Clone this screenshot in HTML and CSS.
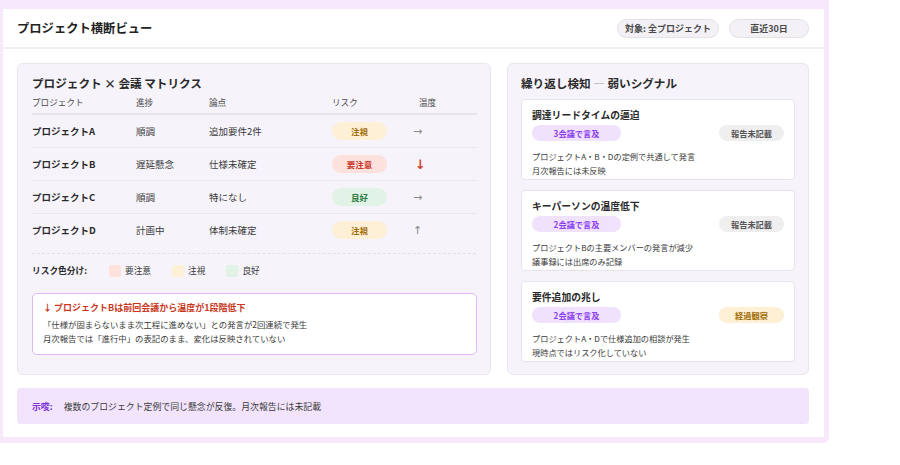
FILE: index.html
```html
<!DOCTYPE html>
<html lang="ja">
<head>
  <meta charset="UTF-8">
  <meta name="viewport" content="width=device-width, initial-scale=1.0">
  <title>プロジェクト横断ビュー</title>
  <link rel="stylesheet" href="styles.css">
</head>
<body>
  <div class="frame">
    <div class="sheet">
      <header class="topbar">
        <h1 class="title">プロジェクト横断ビュー</h1>
        <div class="filters">
          <span class="chip">対象: 全プロジェクト</span>
          <span class="chip">直近30日</span>
        </div>
      </header>

      <main class="content">
        <div class="columns">
          <section class="panel matrix">
            <h2 class="panel-title">プロジェクト × 会議 マトリクス</h2>
            <div class="table">
              <div class="row head">
                <span>プロジェクト</span>
                <span>進捗</span>
                <span>論点</span>
                <span>リスク</span>
                <span class="temp-head">温度</span>
              </div>
              <div class="row">
                <span class="name">プロジェクトA</span>
                <span>順調</span>
                <span>追加要件2件</span>
                <span><em class="risk watch">注視</em></span>
                <span class="temp">→</span>
              </div>
              <div class="row">
                <span class="name">プロジェクトB</span>
                <span>遅延懸念</span>
                <span>仕様未確定</span>
                <span><em class="risk alert">要注意</em></span>
                <span class="temp down">↓</span>
              </div>
              <div class="row">
                <span class="name">プロジェクトC</span>
                <span>順調</span>
                <span>特になし</span>
                <span><em class="risk good">良好</em></span>
                <span class="temp">→</span>
              </div>
              <div class="row last">
                <span class="name">プロジェクトD</span>
                <span>計画中</span>
                <span>体制未確定</span>
                <span><em class="risk watch">注視</em></span>
                <span class="temp">↑</span>
              </div>
            </div>

            <div class="legend">
              <strong>リスク色分け:</strong>
              <span class="key"><i class="swatch alert"></i>要注意</span>
              <span class="key"><i class="swatch watch"></i>注視</span>
              <span class="key"><i class="swatch good"></i>良好</span>
            </div>

            <div class="notice">
              <p class="notice-title">↓ プロジェクトBは前回会議から温度が1段階低下</p>
              <p>「仕様が固まらないまま次工程に進めない」との発言が2回連続で発生</p>
              <p>月次報告では「進行中」の表記のまま、変化は反映されていない</p>
            </div>
          </section>

          <section class="panel signals">
            <h2 class="panel-title">繰り返し検知 <span class="dash">—</span> 弱いシグナル</h2>

            <article class="signal">
              <h3>調達リードタイムの逼迫</h3>
              <div class="tags">
                <span class="tag mention">3会議で言及</span>
                <span class="tag missing">報告未記載</span>
              </div>
              <p>プロジェクトA・B・Dの定例で共通して発言</p>
              <p>月次報告には未反映</p>
            </article>

            <article class="signal">
              <h3>キーパーソンの温度低下</h3>
              <div class="tags">
                <span class="tag mention">2会議で言及</span>
                <span class="tag missing">報告未記載</span>
              </div>
              <p>プロジェクトBの主要メンバーの発言が減少</p>
              <p>議事録には出席のみ記録</p>
            </article>

            <article class="signal">
              <h3>要件追加の兆し</h3>
              <div class="tags">
                <span class="tag mention">2会議で言及</span>
                <span class="tag observe">経過観察</span>
              </div>
              <p>プロジェクトA・Dで仕様追加の相談が発生</p>
              <p>現時点ではリスク化していない</p>
            </article>
          </section>
        </div>

        <div class="insight">
          <strong>示唆:</strong>
          <span>複数のプロジェクト定例で同じ懸念が反復。月次報告には未記載</span>
        </div>
      </main>
    </div>
  </div>
</body>
</html>
```

FILE: styles.css
```css
* {
  box-sizing: border-box;
}

body {
  margin: 0;
  background-color: #ffffff;
  font-family: 'Noto Sans CJK JP', 'Noto Sans', sans-serif;
  color: #3a3a3a;
}

h1, h2, h3, p {
  margin: 0;
}

em {
  font-style: normal;
}

.frame {
  width: 829px;
  height: 443px;
  background-color: #f7e9fb;
  padding: 9px 5px 6px 3px;
  border-radius: 0 0 6px 0;
}

.sheet {
  background-color: #ffffff;
  height: 100%;
}

.topbar {
  height: 40px;
  display: flex;
  align-items: center;
  justify-content: space-between;
  padding: 0 15px 0 14px;
  border-bottom: 2px solid #f1eff4;
}

.title {
  font-size: 12.3px;
  font-weight: 700;
  color: #222;
  line-height: 16px;
}

.filters {
  display: flex;
  gap: 10px;
}

.chip {
  min-width: 80px;
  height: 19px;
  line-height: 17px;
  padding: 0 7px;
  text-align: center;
  font-size: 9px;
  font-weight: 700;
  color: #4a4a4a;
  background-color: #f3f1f6;
  border: 1px solid #e4e1e9;
  border-radius: 10px;
}

.content {
  padding: 14px 15px 14px 14px;
}

.columns {
  display: flex;
  gap: 16px;
}

.panel {
  background-color: #f6f4fa;
  border: 1px solid #e9e6ee;
  border-radius: 6px;
}

.panel-title {
  font-size: 11.6px;
  font-weight: 700;
  line-height: 16px;
  color: #2a2a2a;
}

.matrix {
  width: 474px;
  padding: 11px 14px 18px 14px;
}

.table {
  width: 445px;
}

.row {
  display: grid;
  grid-template-columns: 104px 73px 123px 81px 64px;
  align-items: center;
  height: 33px;
  font-size: 9.5px;
  color: #3a3a3a;
  border-bottom: 1px solid #e9e6ee;
}

.row.head {
  height: 24px;
  font-size: 8.6px;
  color: #4a4a4a;
  border-bottom: 2px solid #e6e3ea;
}

.row.last {
  border-bottom: none;
  height: 32px;
}

.temp-head {
  padding-left: 6px;
}

.name {
  font-weight: 700;
  color: #2a2a2a;
}

.risk {
  display: inline-block;
  width: 55px;
  height: 18px;
  line-height: 18px;
  text-align: center;
  font-size: 8.5px;
  font-weight: 700;
  border-radius: 9px;
}

.risk.watch {
  background-color: #fdf0d6;
  color: #a26c06;
}

.risk.alert {
  background-color: #fde1dd;
  color: #c8392b;
}

.risk.good {
  background-color: #e1f3e7;
  color: #2c7a3f;
}

.temp {
  font-family: 'DejaVu Sans', sans-serif;
  font-size: 11px;
  color: #8a8a8a;
}

.temp.down {
  color: #d2402a;
  font-weight: 700;
  font-size: 13px;
  padding-left: 2px;
}

.legend {
  margin-top: 7px;
  border-top: 1px dashed #e3e0e8;
  padding: 10px 0 10px 0;
  display: flex;
  align-items: center;
  font-size: 8.7px;
  line-height: 14px;
  color: #3a3a3a;
}

.legend strong {
  color: #2a2a2a;
  margin-right: 22px;
}

.key {
  display: flex;
  align-items: center;
  gap: 4px;
  margin-right: 21px;
}

.swatch {
  width: 12px;
  height: 12px;
  border-radius: 2px;
}

.swatch.alert {
  background-color: #fde1dd;
}

.swatch.watch {
  background-color: #fdf0d6;
}

.swatch.good {
  background-color: #e1f3e7;
}

.notice {
  margin-top: 5px;
  width: 445px;
  height: 62px;
  background-color: #ffffff;
  border: 1.5px solid #dbb8f6;
  border-radius: 5px;
  padding: 7px 10px 0 10px;
  font-size: 8.4px;
  line-height: 14px;
  color: #3a3a3a;
}

.notice .notice-title {
  font-size: 9px;
  font-weight: 700;
  color: #c9381c;
  margin-bottom: 2px;
}

.signals {
  width: 302px;
  padding: 11px 13px 12px 13px;
}

.signals .dash {
  color: #a0a0a0;
  font-weight: 400;
}

.signal {
  margin-top: 8px;
  background-color: #ffffff;
  border: 1px solid #e6e3ea;
  border-radius: 4px;
  padding: 8px 10px 2px 10px;
  height: 81px;
}

.signal + .signal {
  margin-top: 10px;
}

.signal h3 {
  font-size: 9.8px;
  font-weight: 700;
  line-height: 14px;
  color: #2a2a2a;
}

.tags {
  display: flex;
  justify-content: space-between;
  margin-top: 3px;
  margin-bottom: 8px;
}

.tag {
  height: 16px;
  line-height: 16px;
  text-align: center;
  font-size: 8.2px;
  font-weight: 700;
  border-radius: 8px;
}

.tag.mention {
  width: 89px;
  background-color: #f0e1fd;
  color: #8b3ff0;
}

.tag.missing {
  width: 65px;
  background-color: #efeff0;
  color: #555;
}

.tag.observe {
  width: 65px;
  background-color: #fdf0d4;
  color: #a26c06;
}

.signal p {
  font-size: 8.2px;
  line-height: 14px;
  color: #3a3a3a;
}

.insight {
  margin-top: 13px;
  height: 36px;
  display: flex;
  align-items: center;
  padding: 0 15px;
  background-color: #f2e4fd;
  border-radius: 4px;
  font-size: 8.9px;
  color: #3a3a3a;
}

.insight strong {
  color: #7b2fd6;
  margin-right: 11px;
}
```
